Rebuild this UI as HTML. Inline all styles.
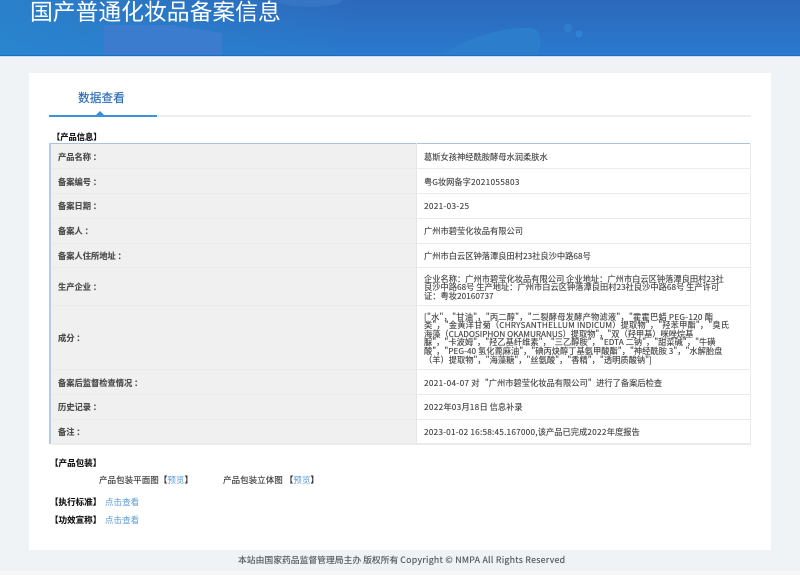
<!DOCTYPE html>
<html lang="zh"><head><meta charset="utf-8"><style>
html,body{margin:0;padding:0;width:800px;height:575px;overflow:hidden;background:#eff3f6;font-family:"Noto Sans CJK TC","Liberation Sans",sans-serif;color:#444}
.a{position:absolute;white-space:nowrap}
#hd{position:absolute;left:0;top:0;width:800px;height:55px;background:linear-gradient(100deg,rgba(42,138,208,.7),rgba(42,138,208,0) 45%),linear-gradient(#2c68bb,#2a7ace);border-bottom:1px solid #1a6cc6;overflow:hidden}
#hd2{position:absolute;left:0;top:56px;width:800px;height:1px;background:#c9dcf2}
#card{position:absolute;left:29px;top:73px;width:742px;height:477px;background:#fff}
.t{font-size:8.25px;line-height:9px;filter:blur(.25px);text-shadow:0 0 .4px rgba(40,40,40,.6)}
.l{left:58px;font-weight:bold;color:#4c4c4c}
.v{left:424px;color:#444}
.b{font-weight:bold;color:#111}
.r{position:absolute;left:52px;width:699px;height:1px;background:#ebebeb}
.lk{color:#5b9bd5;text-shadow:none}
.n{letter-spacing:.3px}
.m{font-size:8.55px}
</style></head><body>
<div id="hd">
<svg class="a" style="left:0;top:0" width="800" height="56" viewBox="0 0 800 56">
<path d="M104 25L170 25L222 33L222 56L104 56Z" fill="#3b7ccf"/>
<path d="M440 56C470 34 510 27 530 28C542 29 542 42 538 56Z" fill="#2c7dcb"/>
<circle cx="568" cy="28" r="4.5" fill="#2f7ccd"/><circle cx="579" cy="34" r="3.5" fill="#2f82d6"/>
<ellipse cx="310" cy="0" rx="32" ry="7" fill="#3674c4"/>
</svg>
<div class="a" style="left:30px;top:-7px;font-family:'Noto Sans CJK SC',sans-serif;font-size:22.8px;line-height:36px;color:#fff;filter:blur(.2px)">国产普通化妆品备案信息</div>
</div>
<div id="hd2"></div>
<div id="card"></div>

<div class="a" style="left:78px;top:89px;font-family:'Noto Sans CJK SC',sans-serif;font-size:11.7px;line-height:17px;color:#2f6db5;filter:blur(.2px);text-shadow:0 0 .4px #2f6db5">数据查看</div>
<div class="a" style="left:49px;top:115px;width:702px;height:1.5px;background:#eeeeee"></div>
<div class="a" style="left:49px;top:115px;width:108px;height:1.5px;background:#3a93de"></div>
<div class="a" style="left:96px;top:111px;width:0;height:0;border-left:4px solid transparent;border-right:4px solid transparent;border-bottom:4px solid #3a8bd8"></div>

<div class="a t b" style="left:52px;top:133px">【产品信息】</div>

<!-- table -->
<div class="a" style="left:50px;top:143px;width:367px;height:301px;background:#f0f0f0"></div>
<div class="a" style="left:417px;top:143px;width:334px;height:301px;background:#fff"></div>
<div class="a" style="left:50px;top:143px;width:701px;height:1px;background:#a9c3e3"></div>
<div class="a" style="left:49px;top:143px;width:2px;height:301px;background:#b5cbe6"></div>
<div class="a" style="left:416px;top:143px;width:1px;height:301px;background:#e6e6e6"></div>
<div class="a" style="left:750px;top:143px;width:1px;height:301px;background:#ebebeb"></div>
<div class="r" style="top:168px"></div><div class="r" style="top:193px"></div><div class="r" style="top:218px"></div><div class="r" style="top:243px"></div><div class="r" style="top:267px"></div><div class="r" style="top:305px"></div><div class="r" style="top:369px"></div><div class="r" style="top:394px"></div><div class="r" style="top:419px"></div><div class="r" style="top:443px;height:2px"></div>

<div class="a t l" style="top:153px">产品名称 ：</div><div class="a t v" style="top:153px">葛斯女孩神经酰胺酵母水润柔肤水</div>
<div class="a t l" style="top:178px">备案编号 ：</div><div class="a t v" style="top:178px">粤G妆网备字<span class="n">2021055803</span></div>
<div class="a t l" style="top:202px">备案日期 ：</div><div class="a t v" style="top:202px"><span class="n">2021-03-25</span></div>
<div class="a t l" style="top:227px">备案人 ：</div><div class="a t v" style="top:227px">广州市碧莹化妆品有限公司</div>
<div class="a t l" style="top:252px">备案人住所地址 ：</div><div class="a t v" style="top:252px">广州市白云区钟落潭良田村23社良沙中路68号</div>
<div class="a t l" style="top:283px">生产企业 ：</div>
<div class="a t v" style="top:274.5px;line-height:8.7px">企业名称：广州市碧莹化妆品有限公司 企业地址：广州市白云区钟落潭良田村23社<br>良沙中路68号 生产地址：广州市白云区钟落潭良田村23社良沙中路68号 生产许可<br>证：粤妆20160737</div>
<div class="a t l" style="top:334px">成分 ：</div>
<div class="a t v" style="top:312.5px;line-height:8.65px"><span style="letter-spacing:.2px">["水"，"甘油"，"丙二醇"，"二裂酵母发酵产物滤液"，"霍霍巴蜡 PEG-120 酯</span><br><span style="letter-spacing:.14px">类"，"金黄洋甘菊（CHRYSANTHELLUM INDICUM）提取物"，"羟苯甲酯"，"臭氏</span><br><span style="letter-spacing:-.05px">海藻（CLADOSIPHON OKAMURANUS）提取物"，"双（羟甲基）咪唑烷基</span><br>脲"，"卡波姆"，"羟乙基纤维素"，"三乙醇胺"，"EDTA 二钠"，"甜菜碱"，"牛磺<br>酸"，"PEG-40 氢化蓖麻油"，"碘丙炔醇丁基氨甲酸酯"，"神经酰胺 3"，"水解胎盘<br>（羊）提取物"，"海藻糖"，"丝氨酸"，"香精"，"透明质酸钠"]</div>
<div class="a t l" style="top:378.5px">备案后监督检查情况 ：</div><div class="a t v" style="top:378.5px"><span class="n">2021-04-07</span> 对 <span style="margin-left:3.5px">"广州市碧莹化妆品有限公司"</span><span style="margin-left:4.5px">进行了备案后检查</span></div>
<div class="a t l" style="top:403px">历史记录 ：</div><div class="a t v" style="top:403px"><span class="n">2022</span>年<span class="n">03</span>月<span class="n">18</span>日 信息补录</div>
<div class="a t l" style="top:428px">备注 ：</div><div class="a t v" style="top:428px"><span style="letter-spacing:.2px">2023-01-02 16:58:45.167000,</span>该产品已完成<span class="n">2022</span>年度报告</div>

<div class="a t b m" style="left:50px;top:459px">【产品包装】</div>
<div class="a t m" style="left:99px;top:476px;color:#333">产品包装平面图【<span class="lk">预览</span>】</div>
<div class="a t m" style="left:223px;top:476px;color:#333">产品包装立体图 【<span class="lk">预览</span>】</div>
<div class="a t b m" style="left:50px;top:498px">【执行标准】</div><div class="a t lk m" style="left:105px;top:498px">点击查看</div>
<div class="a t b m" style="left:50px;top:516px">【功效宣称】</div><div class="a t lk m" style="left:105px;top:516px">点击查看</div>

<div class="a t" style="left:238px;top:555px;font-size:8.8px;color:#555">本站由国家药品监督管理局主办 版权所有 <span style="letter-spacing:.27px">Copyright © NMPA All Rights Reserved</span></div>
<div class="a" style="left:0;top:571px;width:800px;height:4px;background:#f6f7f9"></div>
</body></html>
